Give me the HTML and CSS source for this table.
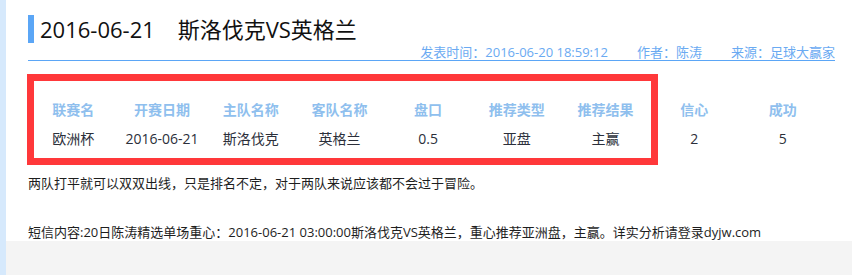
FILE: index.html
```html
<!DOCTYPE html>
<html lang="zh-CN">
<head>
<meta charset="utf-8">
<title>2016-06-21 斯洛伐克VS英格兰</title>
<link rel="stylesheet" href="styles.css">
</head>
<body>
<div class="layout">
  <aside class="rail"></aside>
  <main class="main">
    <article class="article">
      <h1 class="title">2016-06-21&nbsp;&nbsp;&nbsp;&nbsp;斯洛伐克VS英格兰</h1>
      <div class="meta">
        <span>发表时间<span class="colon">：</span>2016-06-20 18:59:12</span>
        <span>作者<span class="colon">：</span>陈涛</span>
        <span>来源<span class="colon">：</span>足球大赢家</span>
      </div>
      <div class="tip-table">
        <div class="grid">
          <div class="th">联赛名</div>
          <div class="th">开赛日期</div>
          <div class="th">主队名称</div>
          <div class="th">客队名称</div>
          <div class="th">盘口</div>
          <div class="th">推荐类型</div>
          <div class="th">推荐结果</div>
          <div class="th">信心</div>
          <div class="th">成功</div>
          <div class="td">欧洲杯</div>
          <div class="td">2016-06-21</div>
          <div class="td">斯洛伐克</div>
          <div class="td">英格兰</div>
          <div class="td">0.5</div>
          <div class="td">亚盘</div>
          <div class="td">主赢</div>
          <div class="td">2</div>
          <div class="td">5</div>
        </div>
        <div class="highlight"></div>
      </div>
      <p class="text">两队打平就可以双双出线，只是排名不定，对于两队来说应该都不会过于冒险。</p>
      <p class="text sms">短信内容:20日陈涛精选单场重心<span class="colon">：</span>2016-06-21 03:00:00斯洛伐克VS英格兰，重心推荐亚洲盘，主赢。详实分析请登录dyjw.com</p>
    </article>
  </main>
</div>
</body>
</html>
```

FILE: styles.css
```css
html, body {
  margin: 0;
  padding: 0;
}

body {
  font-family: "Open Sans", "Noto Sans CJK SC", sans-serif;
  color: #222;
  background: #f4f4f4;
}

.layout {
  display: flex;
  min-height: 100vh;
}

.rail {
  width: 6px;
  flex: none;
  background: #d6e9fc;
}

.main {
  flex: 1;
  background: #f4f4f4;
}

.article {
  background: #fff;
  padding: 15px 17px 0 22px;
}

.title {
  margin: 0;
  height: 28px;
  line-height: 28px;
  border-left: 6px solid #5ba6f6;
  padding-left: 6px;
  font-size: 22px;
  font-weight: normal;
  color: #111;
  white-space: nowrap;
}

/* full-width colon drawn centred in its box */
.colon {
  font-family: "Noto Sans CJK JP", "Noto Sans CJK SC", sans-serif;
}

.meta {
  display: flex;
  justify-content: flex-end;
  gap: 29px;
  padding-top: 1px;
  height: 16px;
  line-height: 16px;
  font-size: 13px;
  color: #6aaaf2;
  border-bottom: 1px solid #5ba6f6;
  white-space: nowrap;
}

.tip-table {
  position: relative;
  margin-top: 34px;
}

.grid {
  display: grid;
  grid-template-columns: repeat(9, 88.7px);
  grid-template-rows: 30px 28px;
  padding-left: 1px;
  text-align: center;
  white-space: nowrap;
}

.th {
  line-height: 30px;
  font-size: 14px;
  font-weight: bold;
  color: #8fbfee;
}

.td {
  line-height: 28px;
  font-size: 14px;
  color: #2b2f3a;
}

/* red frame marking the recommendation columns */
.highlight {
  position: absolute;
  left: -1px;
  top: -21px;
  width: 631px;
  height: 91px;
  box-sizing: border-box;
  border: 7px solid #ff383a;
  pointer-events: none;
}

.text {
  margin: 20px 0 0;
  font-size: 13px;
  line-height: 20px;
  color: #1e1e1e;
  white-space: nowrap;
}

.text.sms {
  margin-top: 30px;
  line-height: 18px;
}
```
